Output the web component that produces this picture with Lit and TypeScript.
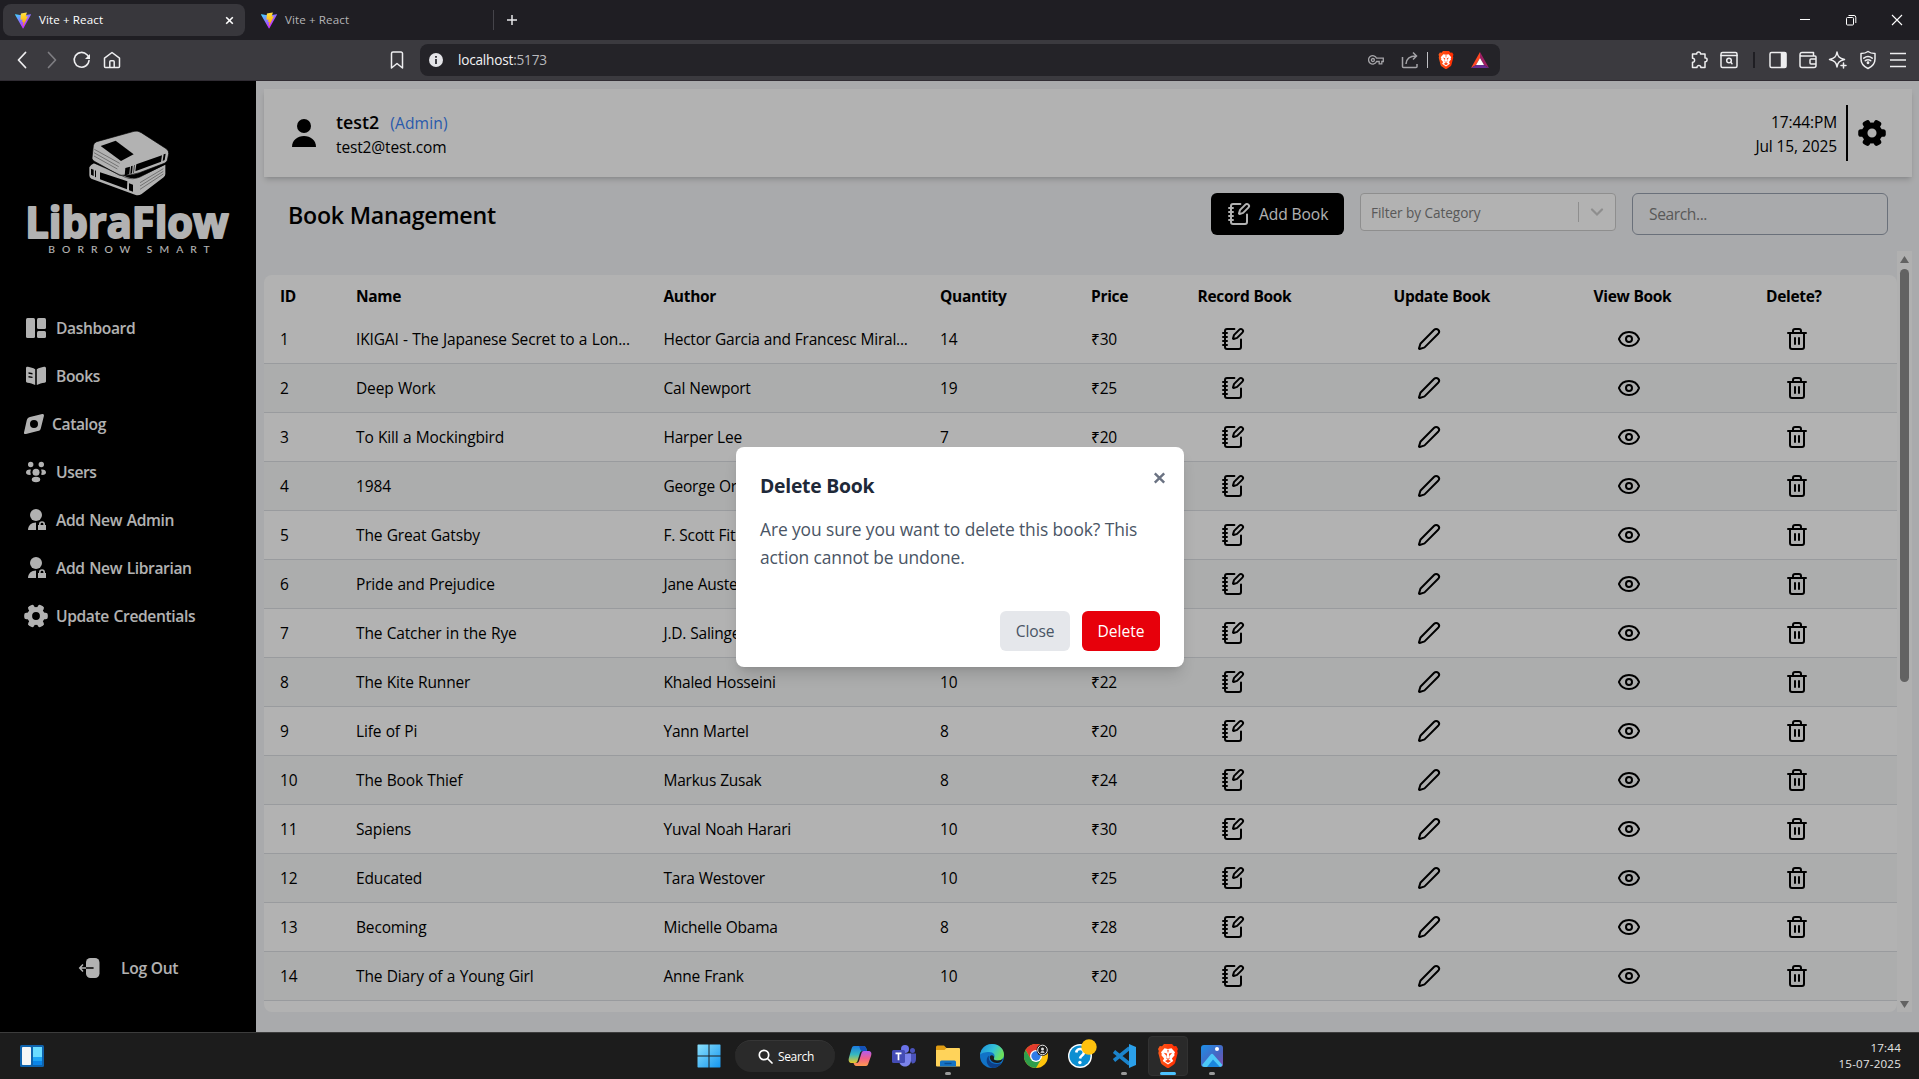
import { LitElement, html, css, svg } from "lit";
import { customElement } from "lit/decorators.js";

const BOOKS: Array<[string, string, number, number]> = [
  ["IKIGAI - The Japanese Secret to a Lon...", "Hector Garcia and Francesc Miral...", 14, 30],
  ["Deep Work", "Cal Newport", 19, 25],
  ["To Kill a Mockingbird", "Harper Lee", 7, 20],
  ["1984", "George Orwell", 12, 18],
  ["The Great Gatsby", "F. Scott Fitzgerald", 10, 22],
  ["Pride and Prejudice", "Jane Austen", 9, 20],
  ["The Catcher in the Rye", "J.D. Salinger", 10, 21],
  ["The Kite Runner", "Khaled Hosseini", 10, 22],
  ["Life of Pi", "Yann Martel", 8, 20],
  ["The Book Thief", "Markus Zusak", 8, 24],
  ["Sapiens", "Yuval Noah Harari", 10, 30],
  ["Educated", "Tara Westover", 10, 25],
  ["Becoming", "Michelle Obama", 8, 28],
  ["The Diary of a Young Girl", "Anne Frank", 10, 20],
];

const HEADERS = ["ID", "Name", "Author", "Quantity", "Price", "Record Book", "Update Book", "View Book", "Delete?"];

const icon = (body: unknown, size = 24, box = "0 0 24 24", cls = "line") =>
  html`<svg class=${cls} width=${size} height=${size} viewBox=${box}>${body}</svg>`;

const notebookPen = svg`<path d="M13.4 2H6a2 2 0 0 0-2 2v16a2 2 0 0 0 2 2h12a2 2 0 0 0 2-2v-7.4"/><path d="M2 6h4M2 10h4M2 14h4M2 18h4"/><path d="M21.378 5.626a1 1 0 1 0-3.004-3.004l-5.01 5.012a2 2 0 0 0-.506.854l-.837 2.87a.5.5 0 0 0 .62.62l2.87-.837a2 2 0 0 0 .854-.506z"/>`;
const pen = svg`<path d="M21.174 6.812a1 1 0 0 0-3.986-3.987L3.842 16.174a2 2 0 0 0-.5.83l-1.321 4.352a.5.5 0 0 0 .623.622l4.353-1.32a2 2 0 0 0 .83-.497z"/>`;
const eye = svg`<path d="M2.062 12.348a1 1 0 0 1 0-.696 10.75 10.75 0 0 1 19.876 0 1 1 0 0 1 0 .696 10.75 10.75 0 0 1-19.876 0"/><circle cx="12" cy="12" r="3"/>`;
const trash = svg`<path d="M3 6h18M19 6v14a2 2 0 0 1-2 2H7a2 2 0 0 1-2-2V6M8 6V4a2 2 0 0 1 2-2h4a2 2 0 0 1 2 2v2M10 11v6M14 11v6"/>`;

const gear = svg`<circle cx="12" cy="12" r="6.400" fill="none" stroke="currentColor" stroke-width="5"/>${[30, 90, 150, 210, 270, 330].map(
  (a) => svg`<rect x="8.700" y="0.200" width="6.600" height="7" rx="2.200" transform="rotate(${a} 12 12)"/>`,
)}`;
const personLock = svg`<circle cx="12" cy="7" r="6"/><path d="M12 14.500V22H4c0-4.400 3.300-7.500 8-7.500z"/><path fill-rule="evenodd" d="M14 17h1v-.8a3 3 0 0 1 6 0v.8h1v5h-8zM16.600 17h2.800v-.8a1.400 1.400 0 0 0-2.800 0z"/>`;

const NAV: Array<[string, unknown, string]> = [
  ["Dashboard", svg`<rect x="2" y="2" width="9" height="20" rx="1.500"/><rect x="13" y="2" width="9" height="11" rx="1.500"/><rect x="13" y="15" width="9" height="7" rx="1.500"/>`, ""],
  ["Books", svg`<path fill-rule="evenodd" d="M2 4.200C2 3 3 2.600 4 2.800c2.800.5 5 1.200 7.200 2.400V21c-2.500-1.300-5-2-7.700-2.300C2.600 18.600 2 18 2 17.200zM4.500 8.300v1.400l4 .7V9zM4.500 12v1.400l4 .7v-1.400z"/><path d="M12.800 5.200C15 4 17.200 3.300 20 2.800c1-.2 2 .4 2 1.400v13c0 .8-.6 1.400-1.500 1.500-2.700.3-5.200 1-7.700 2.300z"/>`, ""],
  ["Catalog", svg`<path fill-rule="evenodd" d="M2 20.500l2.700-12C5.200 6.300 6 5.400 8 4.900l12.200-2.800c1.300-.3 2 .6 1.700 1.800l-3 12c-.4 1.900-1.300 2.800-3.200 3.200L4 22c-1.300.3-2.300-.3-2-1.500zM12 8a4 4 0 1 0 0 8 4 4 0 0 0 0-8z"/>`, "tight"],
  ["Users", svg`<circle cx="12" cy="12.200" r="3.500"/><circle cx="6.700" cy="4.500" r="2.700"/><circle cx="17.300" cy="4.500" r="2.700"/><path d="M6.900 9.600a6 6 0 0 0 0 5.200C4 15.300 2 14.300 2 12.500c0-2 2-3.400 4.900-2.900zM17.100 9.600a6 6 0 0 1 0 5.200c2.900.5 4.900-.5 4.900-2.300 0-2-2-3.400-4.900-2.900z"/><ellipse cx="12" cy="19.500" rx="4.200" ry="2.700"/>`, ""],
  ["Add New Admin", personLock, ""],
  ["Add New Librarian", personLock, ""],
  ["Update Credentials", gear, ""],
];

const viteLogo = html`<svg width="16" height="17" viewBox="0 0 256 257">
  <defs>
    <linearGradient id="va" x1="0" x2=".57" y1=".07" y2=".78"><stop offset="0" stop-color="#41d1ff"/><stop offset="1" stop-color="#bd34fe"/></linearGradient>
    <linearGradient id="vb" x1=".43" x2=".54" y1=".02" y2=".9"><stop offset="0" stop-color="#ffea83"/><stop offset=".08" stop-color="#ffdd35"/><stop offset="1" stop-color="#ffa800"/></linearGradient>
  </defs>
  <path fill="url(#va)" d="M255.153 37.938L134.897 252.976c-2.483 4.440-8.862 4.466-11.382.048L.875 37.958c-2.746-4.814 1.371-10.646 6.827-9.670l120.385 21.517a6.537 6.537 0 0 0 2.322-.004l117.867-21.483c5.438-.991 9.574 4.796 6.877 9.620z"/>
  <path fill="url(#vb)" d="M185.432.063L96.440 17.501a3.268 3.268 0 0 0-2.634 3.014l-5.474 92.456a3.268 3.268 0 0 0 3.997 3.378l24.777-5.718c2.318-.535 4.413 1.507 3.936 3.838l-7.361 36.047c-.495 2.426 1.782 4.500 4.151 3.780l15.304-4.649c2.372-.720 4.652 1.360 4.150 3.788l-11.698 56.621c-.732 3.542 3.979 5.473 5.943 2.437l1.313-2.028 72.516-144.720c1.215-2.423-.880-5.186-3.540-4.672l-25.505 4.922c-2.396.462-4.435-1.770-3.759-4.114l16.646-57.705c.677-2.350-1.370-4.583-3.769-4.113z"/>
</svg>`;

const braveShield = (w: number, h: number) => html`<svg width=${w} height=${h} viewBox="0 0 20 24">
  <defs><linearGradient id="br" x1="0" x2="1"><stop offset="0" stop-color="#ff5a1a"/><stop offset="1" stop-color="#ff2a00"/></linearGradient></defs>
  <path fill="url(#br)" d="M6 0h8l2 2.300 2.200-.3L20 5l-.8 2 .5 2-2.500 9.500c-.3 1-.8 1.700-1.700 2.300L10.800 24H9.200l-4.700-3.200c-.9-.6-1.400-1.300-1.700-2.300L.3 9l.5-2L0 5l1.800-3 2.200.3z"/>
  <path fill="#fff" d="M6.500 4.200L10 5l3.500-.8 3.500 4-.8 1.600.4 1.400-2.700 3.300 1.300 2.500L10 20.600 4.800 17l1.300-2.500-2.700-3.300.4-1.400L3 8.200z"/>
  <path fill="#ff4314" d="M5.800 8.800l3 .8.200 1.200-.8 3 1.800 1 1.800-1-.8-3 .2-1.200 3-.8-2.500 3 .3 2.300L10 16l-2-1.900.3-2.300zM9.300 5.800h1.400l-.4 2.700h-.6zM7 17l3-1.400 3 1.400-3 2z"/>
</svg>`;

@customElement("app-root")
export class AppRoot extends LitElement {
  static styles = css`
    :host { display: block; width: 1919px; height: 1079px; overflow: hidden; font-family: "Open Sans", "Noto Sans", sans-serif; }
    * { box-sizing: border-box; }
    svg { display: block; flex: none; }
    .line { fill: none; stroke: currentColor; stroke-width: 2; stroke-linecap: round; stroke-linejoin: round; }
    .solid { fill: currentColor; }
    .screen { display: flex; flex-direction: column; width: 1919px; height: 1079px; }

    .tabs { height: 40px; background: #1f1e23; display: flex; align-items: center; padding-left: 3px; color: #fff; flex: none; }
    .tab { display: flex; align-items: center; width: 242px; height: 32px; padding: 0 11px 0 12px; border-radius: 8px; font-size: 11.600px; line-height: 16px; letter-spacing: .1px; }
    .tab.active { background: #38373c; }
    .tab.idle { margin-left: 4px; color: #b4b4b6; }
    .tab-title { margin: -1px 0 0 8px; flex: 1; }
    .tab-sep { width: 1px; height: 20px; background: #45444a; margin-left: 2px; }
    .plus { margin-left: 9px; }
    .win { margin-left: auto; display: flex; padding-right: 0; }
    .win span { width: 46px; display: flex; justify-content: center; }
    .win svg { margin-right: -2px; }

    .toolbar { height: 41px; background: #3b3a3f; border-bottom: 1px solid #302c33; display: flex; align-items: center; color: #eeeef0; flex: none; }
    .navs { display: flex; padding-left: 7px; width: 382px; }
    .slot { width: 30px; display: flex; justify-content: center; align-items: center; }
    .dim { color: #7e7d82; }
    .url { width: 1080px; height: 32px; margin-left: 8px; background: #242328; border-radius: 8px; display: flex; align-items: center; padding-left: 9px; font-size: 13.600px; line-height: 18px; letter-spacing: -.2px; color: #f2f2f4; }
    .url .host { flex: 1; margin: -1px 0 0 15px; }
    .port { color: #b9b9bd; }
    .key { width: 44px; display: flex; justify-content: center; color: #a5a4a8; }
    .share { width: 24px; display: flex; justify-content: center; color: #a5a4a8; }
    .usep { width: 10px; display: flex; justify-content: center; }
    .usep i { width: 1px; height: 16px; background: #c0c0c4; }
    .bshield { width: 28px; display: flex; justify-content: center; }
    .bat { width: 40px; display: flex; justify-content: center; }
    .tools { margin-left: auto; display: flex; align-items: center; padding-right: 6px; }
    .tsep { width: 19px; display: flex; justify-content: center; }
    .tsep i { width: 2px; height: 16px; background: #1f1e23; }

    .page { position: relative; flex: 1; display: flex; background: #f3f4f6; min-height: 0; }
    .side { width: 256px; background: #000; color: #fff; display: flex; flex-direction: column; flex: none; padding-top: 9px; }
    .brand { height: 214px; }
    .brand-name { font: 700 127px "Open Sans", sans-serif; fill: #fff; stroke: #fff; stroke-width: 6; stroke-linejoin: round; }
    .brand-tag { font: 500 31px Lato, "Open Sans", sans-serif; fill: #fff; }
    .menu { display: flex; flex-direction: column; }
    .item { height: 48px; display: flex; align-items: center; gap: 8px; padding-left: 24px; font-size: 15.600px; font-weight: 600; letter-spacing: -.38px; word-spacing: 1px; }
    .item.tight { padding-left: 22px; gap: 6px; }
    .logout { margin-top: auto; height: 48px; margin-bottom: 40px; display: flex; align-items: center; padding-left: 78px; gap: 19px; font-size: 15.600px; font-weight: 600; letter-spacing: -.25px; }

    .main { flex: 1; display: flex; flex-direction: column; padding: 8px 7px 0 8px; min-width: 0; }
    .head { height: 88px; background: #fff; box-shadow: 0 4px 6px -1px rgba(0,0,0,.14), 0 2px 4px -2px rgba(0,0,0,.12); display: flex; align-items: center; padding: 0 24px; }
    .who { margin-left: 16px; padding-top: 1px; }
    .who-top { display: flex; align-items: baseline; gap: 11px; line-height: 26px; font-size: 17.800px; font-weight: 600; letter-spacing: 0; }
    .role { color: #3b82f6; font-size: 15.600px; font-weight: 500; letter-spacing: .15px; }
    .mail { font-size: 15.500px; line-height: 24px; letter-spacing: -.13px; margin-top: -1px; }
    .clock { margin-left: auto; text-align: right; font-size: 15.500px; font-weight: 500; line-height: 24px; letter-spacing: -.1px; padding-right: 9px; border-right: 2px solid #000; height: 56px; padding-top: 5px; }
    .cog { margin-left: 10px; margin-right: 2px; }

    .bar { height: 74px; display: flex; padding: 16px 24px 0; gap: 16px; }
    .title { flex: 1; font-size: 23.200px; font-weight: 600; line-height: 44px; letter-spacing: -.24px; }
    .add { width: 133px; height: 42px; border-radius: 6px; background: #000; color: #fff; display: flex; align-items: center; gap: 8px; padding-left: 16px; font-size: 15.600px; letter-spacing: -.1px; }
    .select { width: 256px; height: 38px; background: #fff; border: 1px solid #ccc; border-radius: 4px; display: flex; align-items: center; padding-left: 10px; font-size: 13.600px; color: #808080; letter-spacing: -.06px; }
    .select span { flex: 1; }
    .select i { width: 1px; height: 20px; background: #ccc; }
    .select b { width: 36px; display: flex; justify-content: center; color: #ccc; }
    .search { width: 256px; height: 42px; border: 1px solid #99a1af; border-radius: 6px; color: #808080; font-size: 15.600px; line-height: 41px; padding-left: 16px; letter-spacing: -.4px; }

    .scroller { height: 761px; display: flex; }
    .table { flex: 1; margin-top: 24px; background: #fff; border-radius: 8px; overflow: hidden; }
    .row { display: grid; grid-template-columns: 76px 307.500px 276.500px 151px 106.500px 196px 200px 172.500px 1fr; height: 49px; align-items: center; border-bottom: 1px solid #dcdee2; font-size: 15.500px; letter-spacing: -.23px; word-spacing: .3px; }
    .row span { padding-left: 16px; white-space: nowrap; }
    .row .name { letter-spacing: -.15px; word-spacing: .5px; }
    .row .act { padding-left: 39px; }
    .row .del { padding-left: 35px; }
    .row.even { background: #f7f8f8; }
    .row.th { height: 40px; border-bottom: 0; font-weight: 700; letter-spacing: -.32px; padding-top: 1px; }
    .track { width: 15px; background: #fcfcfc; display: flex; flex-direction: column; align-items: center; padding: 5px 0 4px; }
    .thumb { width: 9px; height: 413px; margin-top: 6px; border-radius: 5px; background: #8d8d8d; }
    .track .down { margin-top: auto; }

    .overlay { position: absolute; inset: 0; background: rgba(0,0,0,.3); }
    .modal { position: absolute; left: 736px; top: 366px; width: 448px; height: 220px; background: #fff; border-radius: 8px; box-shadow: 0 10px 15px -3px rgba(0,0,0,.14), 0 4px 6px -4px rgba(0,0,0,.12); padding: 24px; display: flex; flex-direction: column; color: #4a5565; }
    .modal-head { display: flex; justify-content: space-between; height: 28px; }
    .modal-title { font-size: 19.400px; font-weight: 700; line-height: 30px; color: #1e2939; letter-spacing: -.27px; }
    .x { color: #6a7282; margin: 0 -6px 0 0; }
    .modal-text { margin-top: 16px; font-size: 17.400px; line-height: 28px; letter-spacing: -.1px; white-space: nowrap; }
    .actions { margin-top: auto; display: flex; justify-content: flex-end; gap: 12px; margin-bottom: -8px; }
    .btn { height: 40px; border-radius: 6px; line-height: 41px; text-align: center; font-size: 15.600px; letter-spacing: -.15px; width: 70px; background: #e5e7eb; }
    .btn.red { width: 78px; background: #e7000b; color: #fff; letter-spacing: 0; }

    .task { height: 47px; flex: none; background: #1c1c1c; border-top: 1px solid #3c3c3c; display: flex; align-items: center; color: #fff; }
    .task-left { width: 687px; padding-left: 20px; }
    .app { width: 44px; height: 46px; display: flex; align-items: center; justify-content: center; position: relative; }
    .app.on::before { content: ""; position: absolute; inset: 3px 2px; border-radius: 4px; background: #2a2a2a; border: 1px solid #323232; }
    .app svg { position: relative; }
    .app .help { left: 2px; top: -2px; }
    .dot::after { content: ""; position: absolute; left: 19px; bottom: 4px; width: 6px; height: 3px; border-radius: 2px; background: #9a9a9a; }
    .on::after { content: ""; position: absolute; left: 14px; bottom: 4px; width: 16px; height: 3px; border-radius: 2px; background: #4cc2ff; }
    .pill { width: 100px; height: 32px; margin: 0 3px 0 4px; border-radius: 16px; background: #2a2a2a; border-top: 1px solid #363636; display: flex; align-items: center; padding-left: 23px; gap: 5px; font-size: 12px; font-weight: 500; letter-spacing: -.35px; }
    .when { margin-left: auto; padding-right: 18px; text-align: right; font-size: 11.600px; line-height: 16px; letter-spacing: .2px; color: #e4e4e4; }
  `;

  private tabStrip() {
    return html`<div class="tabs">
      <div class="tab active">${viteLogo}<span class="tab-title">Vite + React</span>
        <svg width="9" height="9" viewBox="0 0 9 9"><path d="M1.200 1.200l6.600 6.600M7.800 1.200L1.200 7.800" stroke="#fff" stroke-width="1.600"/></svg></div>
      <div class="tab idle">${viteLogo}<span class="tab-title">Vite + React</span></div>
      <div class="tab-sep"></div>
      <svg class="plus" width="18" height="18" viewBox="0 0 18 18"><path d="M9 4v10M4 9h10" stroke="#e8e8ea" stroke-width="1.500"/></svg>
      <div class="win">
        <span><svg width="12" height="12" viewBox="0 0 12 12"><path d="M1 5.500h10" stroke="#fff"/></svg></span>
        <span><svg width="12" height="12" viewBox="0 0 12 12" fill="none" stroke="#fff"><rect x="1.500" y="3.500" width="7" height="7.500" rx="1"/><path d="M3.500 1.500h5.500a1.800 1.800 0 0 1 1.800 1.800V9"/></svg></span>
        <span><svg width="12" height="12" viewBox="0 0 12 12"><path d="M1 1l10 10M11 1L1 11" stroke="#fff" stroke-width="1.100"/></svg></span>
      </div>
    </div>`;
  }

  private toolbar() {
    const t = (body: unknown) => html`<svg width="20" height="20" viewBox="0 0 20 20" fill="none" stroke="currentColor" stroke-width="1.500" stroke-linejoin="round" stroke-linecap="round">${body}</svg>`;
    return html`<div class="toolbar">
      <div class="navs">
        <span class="slot">${t(svg`<path stroke-width="1.800" d="M13.500 2.500L6.500 10l7 7.500"/>`)}</span>
        <span class="slot dim">${t(svg`<path stroke-width="1.700" d="M6.500 2.500l7 7.500-7 7.500"/>`)}</span>
        <span class="slot">${t(svg`<path stroke-width="1.600" d="M17 10.500A7.400 7.400 0 1 1 15 4.700L16.500 6.500"/><path fill="currentColor" stroke="none" d="M18 4v5h-5z"/>`)}</span>
        <span class="slot">${t(svg`<path d="M2.500 8.200L10 2.500l7.500 5.700v8.300a1 1 0 0 1-1 1h-13a1 1 0 0 1-1-1z"/><path d="M7.800 17v-5.200a1 1 0 0 1 1-1h2.400a1 1 0 0 1 1 1V17"/>`)}</span>
      </div>
      <span class="slot">${t(svg`<path d="M4.500 3.500a1.500 1.500 0 0 1 1.500-1.500h8a1.500 1.500 0 0 1 1.500 1.500V18L10 13.500 4.500 18z"/>`)}</span>
      <div class="url">
        <svg width="14" height="14" viewBox="0 0 14 14"><circle cx="7" cy="7" r="7" fill="#e4e4e8"/><path d="M7 3v1.800M7 6v5" stroke="#242328" stroke-width="1.700"/></svg>
        <span class="host">localhost<span class="port">:5173</span></span>
        <span class="key"><svg width="16" height="12" viewBox="0 0 16 12" fill="none" stroke="currentColor" stroke-width="1.300"><path d="M8.600 4.200H15.300V7.500h-1.500v2.300h-2.600V7.500H8.600A4.200 4.200 0 1 1 8.600 4.200z"/><circle cx="4.900" cy="6" r="1.500"/></svg></span>
        <span class="share"><svg width="18" height="18" viewBox="0 0 18 18" fill="none" stroke="currentColor" stroke-width="1.500"><path d="M1.500 6v9.500a1 1 0 0 0 1 1h12.500a1 1 0 0 0 1-1V13"/><path d="M5 13C5.300 8 8.500 5 15 5M12 1.500L15.500 5 12 8.500"/></svg></span>
        <span class="usep"><i></i></span>
        <span class="bshield">${braveShield(16, 18)}</span>
        <span class="bat"><svg width="18" height="16" viewBox="0 0 18 16"><path fill="#ff4724" d="M9 0L0 16l5-3 4-7z"/><path fill="#9e1f63" d="M9 0l9 16-5-3-4-7z"/><path fill="#662d91" d="M0 16h18l-5-3H5z"/><path fill="#fff" d="M9 6l4 7H5z"/></svg></span>
      </div>
      <div class="tools">
        <span class="slot">${t(svg`<path d="M3.500 4h4.300c-.7-2.800 4.300-2.800 3.700 0H16v4c2.800-.8 2.800 4.200 0 3.700V17.500H11.800c.5-2.600-4.200-2.600-3.800 0H3.500V12.200c2.800.4 2.800-4.400 0-4z"/>`)}</span>
        <span class="slot">${t(svg`<rect x="2" y="2.500" width="16" height="15" rx="1.500"/><path d="M2 5.500h16"/><circle cx="10" cy="10.500" r="2.300"/><path d="M11.800 12.300L13 13.700"/>`)}</span>
        <span class="tsep"><i></i></span>
        <span class="slot">${t(svg`<rect x="2" y="2.500" width="16" height="15" rx="1.500"/><path fill="currentColor" d="M13.500 3h4v14h-4z"/>`)}</span>
        <span class="slot">${t(svg`<path d="M2 5v10.500a2 2 0 0 0 2 2h12a2 2 0 0 0 2-2V7a1 1 0 0 0-1-1H3.500A1.500 1.500 0 0 1 2 4.500 2 2 0 0 1 4 2.500h11.500V6M18 9h-5a1 1 0 0 0-1 1v3a1 1 0 0 0 1 1h5"/>`)}</span>
        <span class="slot">${t(svg`<path d="M9 2c.8 4.800 2.200 6.200 7.500 7.500C11.200 10.800 9.800 12.200 9 17c-.8-4.800-2.200-6.200-7.500-7.500C6.800 8.200 8.200 6.800 9 2zM15.500 13v5M13 15.500h5"/>`)}</span>
        <span class="slot">${t(svg`<path d="M10 1.500c2 1.500 4.500 2 7 2V9c0 4.500-2.500 7.500-7 9.500-4.500-2-7-5-7-9.500V3.500c2.500 0 5-.5 7-2z"/><path d="M5.800 8.200c2.500-2 5.900-2 8.400 0M7.300 10.700c1.700-1.200 3.700-1.200 5.400 0"/><circle cx="10" cy="12.800" r=".7" fill="currentColor"/>`)}</span>
        <span class="slot">${t(svg`<path stroke-width="1.600" stroke-linecap="butt" d="M2 3.500h16M2 10h16M2 16.500h16"/>`)}</span>
      </div>
    </div>`;
  }

  private sidebar() {
    return html`<aside class="side">
      <div class="brand"><svg width="256" height="180" viewBox="0 0 768 540">
        <g fill="#fff">
          <path d="M268 232q4-8 14-12l100 42q18 6 36 0l78-38v28q0 6-5 10l-66 50q-8 5-18 3L274 266q-6-3-6-10z"/>
          <path stroke="#000" stroke-width="2" d="M276 205l4-38q1-9 10-12l112-31q12-3 22 4l76 49q7 6 6 14l-4 20q-2 6-9 9l-74 28q-25 9-60 8l-74-41q-8-3-9-10z"/>
        </g>
        <g fill="#000">
          <path d="M302 168l45-16 54 41-38 20z"/>
          <path d="M376 234l14-4-2 22-14 5zM393 229l5-2-2 23-5 2zM402 226l2-1-2 23-2 1zM409 223l77-27-3 19-77 29zM491 193l6-2-3 19-6 3z"/>
          <path d="M273 236l8 3v19l-8-4zM285 241l3 1v20l-3-1zM300 247l82 27-1 24-81-30zM387 280l12 4v21l-12-4z"/>
        </g>
        <g fill="none" stroke="#000" stroke-width="1.100">
          <path d="M283 178l76 42M282 188l74 42M282 198l70 39M420 278l70-42M420 288l70-44M420 298l70-46"/>
          <path stroke-width="1.500" d="M276 216l100 46q22 9 44-1l74-38"/>
        </g>
        <text class="brand-name" x="76" y="443" textLength="610" lengthAdjust="spacingAndGlyphs">LibraFlow</text>
        <text class="brand-tag" x="145" y="489" textLength="484">BORROW SMART</text>
      </svg></div>
      <nav class="menu">${NAV.map(([label, body, cls]) => html`<div class="item ${cls}">${icon(body, 24, "0 0 24 24", "solid")}<span>${label}</span></div>`)}</nav>
      <div class="logout">
        <svg width="24" height="24" viewBox="0 0 24 24"><rect x="8" y="2" width="13.500" height="20" rx="4.500" fill="#fff"/><path d="M15 12H8" stroke="#000" stroke-width="1.600" stroke-linecap="round"/><path d="M8 12H2M5 8.500L1.700 12 5 15.500" fill="none" stroke="#fff" stroke-width="1.500"/></svg>
        <span>Log Out</span>
      </div>
    </aside>`;
  }

  private table() {
    return html`<div class="scroller">
      <div class="table">
        <div class="row th">${HEADERS.map((h) => html`<span>${h}</span>`)}</div>
        ${BOOKS.map(([name, author, qty, price], i) => html`<div class="row ${i % 2 ? "even" : ""}">
          <span>${i + 1}</span><span class="name">${name}</span><span>${author}</span><span>${qty}</span><span>₹${price}</span>
          <span class="act">${icon(notebookPen)}</span><span class="act">${icon(pen)}</span><span class="act">${icon(eye)}</span><span class="del">${icon(trash)}</span>
        </div>`)}
      </div>
      <div class="track">
        <svg width="9" height="7" viewBox="0 0 9 7"><path d="M4.500 0L9 7H0z" fill="#8d8d8d"/></svg>
        <div class="thumb"></div>
        <svg class="down" width="9" height="7" viewBox="0 0 9 7"><path d="M4.500 7L9 0H0z" fill="#8d8d8d"/></svg>
      </div>
    </div>`;
  }

  private modal() {
    return html`<div class="overlay"></div>
      <div class="modal">
        <div class="modal-head"><div class="modal-title">Delete Book</div>
          <svg class="x" width="13" height="14" viewBox="0 0 13 14"><path d="M1.800 2.300l9.400 9.400M11.200 2.300l-9.400 9.400" stroke="currentColor" stroke-width="2.400"/></svg></div>
        <div class="modal-text">Are you sure you want to delete this book? This<br>action cannot be undone.</div>
        <div class="actions"><div class="btn">Close</div><div class="btn red">Delete</div></div>
      </div>`;
  }

  private taskbar() {
    return html`<div class="task">
      <div class="task-left"><svg width="24" height="22" viewBox="0 0 24 22"><rect width="24" height="22" rx="1.500" fill="#0f63ad"/><rect x="2" y="2" width="9" height="18" rx=".8" fill="#f6f6f6"/><rect x="13" y="2" width="9" height="10" fill="#6bdcff"/><rect x="13" y="12" width="9" height="4" fill="#1ea5f5"/><rect x="13" y="16" width="9" height="4" fill="#0a84e8"/></svg></div>
      <div class="app"><svg width="24" height="24" viewBox="0 0 24 24"><defs><linearGradient id="wn" x2="1" y2="1"><stop stop-color="#8be0fc"/><stop offset="1" stop-color="#1496f0"/></linearGradient></defs><path fill="url(#wn)" d="M1 .5h10.500v11H.5V1zM12.500.5H23l.5.5v10.500h-11zM.5 12.500h11v11H1l-.5-.5zM12.500 12.500h11V23l-.5.500H12.500z"/></svg></div>
      <div class="pill"><svg width="15" height="15" viewBox="0 0 15 15" fill="none" stroke="#fff" stroke-width="1.700"><circle cx="6" cy="6" r="4.700"/><path d="M9.500 9.500l4.500 4.500" stroke-linecap="round"/></svg>Search</div>
      <div class="app"><svg width="24" height="24" viewBox="0 0 24 24"><defs><linearGradient id="c1" x2="0" y2="1"><stop stop-color="#1b7be0"/><stop offset=".5" stop-color="#36b8c0"/><stop offset="1" stop-color="#e9c927"/></linearGradient><linearGradient id="c2" x2="0" y2="1"><stop stop-color="#b35cf0"/><stop offset=".5" stop-color="#f0608a"/><stop offset="1" stop-color="#fd9a4e"/></linearGradient></defs><path fill="url(#c1)" d="M6 2h9.500c2 0 2.500 1.500 3 3l.6 2h-4.600c-1.500 0-2.300 1-2.700 2.500L9.500 17c-.4 1.300-1 2-2.300 2H4c-3 0-4-2-3-5.500L3.300 5.500C4 3 4.600 2 6 2z"/><path fill="#1552b8" d="M11 2h4.500c2 0 2.500 1.500 3 3l.6 2h-4.500c-1.300 0-2-.4-2.400-1.800z"/><path fill="url(#c2)" d="M18 22H8.500c-2 0-2.500-1.500-3-3h3c1.500 0 2.300-1 2.700-2.500L13.500 9c.4-1.300 1-2 2.300-2H20c3 0 4 1.500 3 5l-2.300 6.500C20 21 19.400 22 18 22z"/></svg></div>
      <div class="app"><svg width="24" height="24" viewBox="0 0 24 24"><circle cx="13" cy="5" r="4" fill="#6a72e8"/><circle cx="20.500" cy="6.500" r="2.500" fill="#4b53bc"/><path fill="#4b53bc" d="M16 9.500h8V15c0 3-1.500 4.500-4 4.500z"/><path fill="#7b83eb" d="M7 9.500h12V16c0 4-2.500 6.500-6 6.500S7 20 7 16z"/><rect y="6" width="13" height="13" rx="1.500" fill="#444cb5"/><path d="M3.500 9.300h6M6.500 9.300v7" stroke="#fff" stroke-width="1.700"/></svg></div>
      <div class="app dot"><svg width="24" height="24" viewBox="0 0 24 24"><path fill="#e09c12" d="M0 3a1.500 1.500 0 0 1 1.500-1.500H8L10.500 4H23v4H0z"/><path fill="#ffd35a" d="M0 6h8.500l2-2H23a1 1 0 0 1 1 1v17.500H1a1 1 0 0 1-1-1z"/><path fill="#1573c4" d="M4 22.500V18a1.500 1.500 0 0 1 1.500-1.500h13A1.500 1.500 0 0 1 20 18v4.500z"/><path d="M8.500 19.500h7" stroke="#0b4d8f" stroke-width="1.400"/></svg></div>
      <div class="app"><svg width="24" height="24" viewBox="0 0 24 24"><defs><linearGradient id="e1" x2="1" y2=".4"><stop stop-color="#1d8fdb"/><stop offset=".6" stop-color="#34c2d8"/><stop offset="1" stop-color="#6ce05c"/></linearGradient></defs><circle cx="12" cy="12" r="12" fill="#1173c7"/><path fill="url(#e1)" d="M0 11C.8 4.500 5.800 0 12 0c7 0 12 5 12 10.500 0 4-3 6-6.300 6-2.500 0-4.500-.8-3.700-2.200 1.700-2.800-.2-6.300-5-6.300C4.800 8 1 9 0 11z"/><path fill="#0d3f88" d="M9 11.500c-1.500 6 4 10.500 12.500 7.500C19.500 22.200 16 24 12.300 24 7 23 4.500 15 9 11.500z"/><path fill="#1c1c1c" d="M14 14.300c-.8 1.400 1.200 2.200 3.700 2.200 2.500 0 4.300-.8 5.300-2-1 3-3 4.500-6 4.500-4.500 0-7.500-3-7.200-6.500 1.200-2 4.700-1.500 4.200 1.800z"/></svg></div>
      <div class="app"><svg width="25" height="24" viewBox="0 0 25 24"><circle cx="12" cy="12" r="12" fill="#ffc40c"/><path fill="#e33b2e" d="M1.600 6A12 12 0 0 1 22.400 6H12l-5.200 9z"/><path fill="#2f9e4c" d="M1.600 6A12 12 0 0 0 12 24l5.200-9H6.800z"/><circle cx="12" cy="12" r="6" fill="#fff"/><circle cx="12" cy="12" r="4.700" fill="#2f7be8"/><circle cx="18.500" cy="6" r="6" fill="#1c1c1c"/><circle cx="18.500" cy="6" r="4.800" fill="none" stroke="#e8e8e8"/><circle cx="18.500" cy="5" r="1.500" fill="#ddd"/><path d="M16.500 9c0-3 4-3 4 0z" fill="#bbb"/></svg></div>
      <div class="app"><svg class="help" width="30" height="30" viewBox="0 0 30 30"><circle cx="13" cy="17" r="12" fill="#fff"/><circle cx="13" cy="17" r="10.600" fill="#0b8fd2"/><path d="M9.200 13.500c.5-5 8.300-4.300 7.600.5-.4 2.500-3.500 2.500-3.800 5.500" fill="none" stroke="#fff" stroke-width="2.600"/><circle cx="12.900" cy="23.500" r="1.700" fill="#fff"/><circle cx="22" cy="8" r="7.700" fill="#ffc20e"/></svg></div>
      <div class="app dot"><svg width="24" height="24" viewBox="0 0 24 24"><path d="M17.500 4L2 16.500M17.500 20L2 7.500" stroke="#1b84cc" stroke-width="3.600" stroke-linejoin="round" fill="none"/><path fill="#2ba0ea" d="M17 0l7 3v18l-7 3z"/></svg></div>
      <div class="app on">${braveShield(20, 24)}</div>
      <div class="app dot"><svg width="22" height="22" viewBox="0 0 22 22"><defs><linearGradient id="p1" x2="1" y2="1"><stop stop-color="#1c8fe8"/><stop offset=".6" stop-color="#4a64c0"/><stop offset="1" stop-color="#8050b0"/></linearGradient></defs><rect width="22" height="22" rx="3" fill="url(#p1)"/><path fill="#4cc8f8" d="M1 20L9.500 9.700a2 2 0 0 1 3 0L21.500 20q-1 2-3 2h-15q-2 0-2.500-2z"/><path fill="#1a86dc" d="M6 22l6-7.500 7 7.500z"/><circle cx="16" cy="4" r="2" fill="#fff"/></svg></div>
      <div class="when">17:44<br>15-07-2025</div>
    </div>`;
  }

  render() {
    return html`<div class="screen">
      ${this.tabStrip()}${this.toolbar()}
      <div class="page">
        ${this.sidebar()}
        <main class="main">
          <header class="head">
            <svg width="32" height="32" viewBox="0 0 32 32"><circle cx="16" cy="9" r="7"/><path d="M4 30c0-7 5.500-11 12-11s12 4 12 11z"/></svg>
            <div class="who">
              <div class="who-top">test2 <span class="role">(Admin)</span></div>
              <div class="mail">test2@test.com</div>
            </div>
            <div class="clock">17:44:PM<br>Jul 15, 2025</div>
            <div class="cog">${icon(gear, 28, "0 0 24 24", "solid")}</div>
          </header>
          <div class="bar">
            <div class="title">Book Management</div>
            <div class="add">${icon(notebookPen)}<span>Add Book</span></div>
            <div class="select"><span>Filter by Category</span><i></i><b><svg width="14" height="9" viewBox="0 0 14 9"><path d="M2 1.500l5 5 5-5" fill="none" stroke="currentColor" stroke-width="2.200" stroke-linecap="round"/></svg></b></div>
            <div class="search">Search...</div>
          </div>
          ${this.table()}
        </main>
        ${this.modal()}
      </div>
      ${this.taskbar()}
    </div>`;
  }
}
